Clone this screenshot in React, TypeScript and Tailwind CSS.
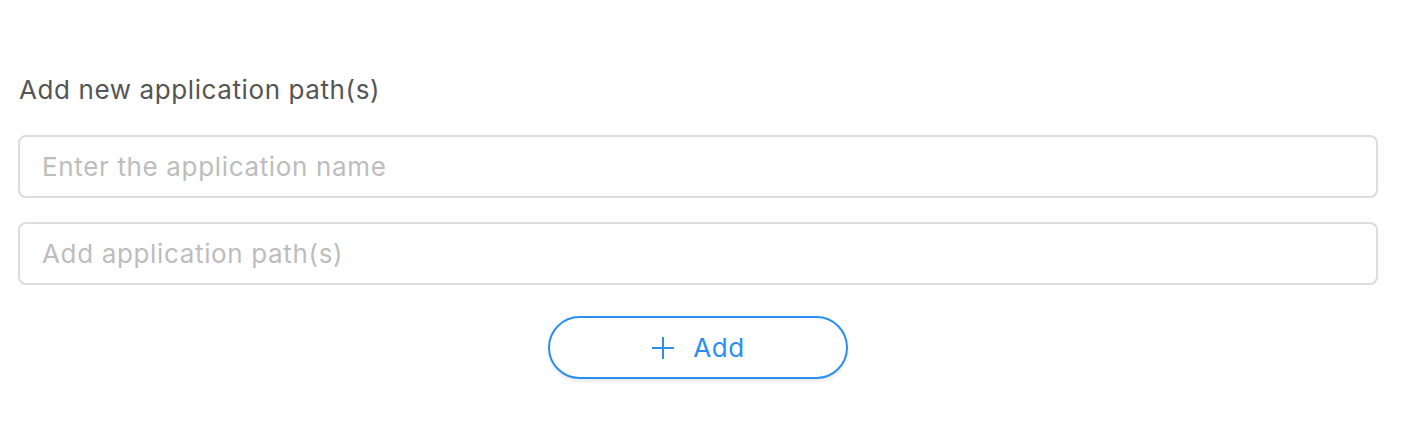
import React from "react";

export default function App() {
  return (
    <div className="w-[1416px] h-[448px] bg-white pt-[72px] px-[18px]" style={{ fontFamily: "Inter, 'Noto Sans', sans-serif" }}>
      <div className="w-[1360px]">
        <div className="text-[26px] leading-[36px] tracking-[0.6px] text-[#555555] pl-[1px] mb-[27px]">Add new application path(s)</div>
        <div className="flex flex-col gap-[24px]">
          <input
            className="h-[63px] w-full rounded-[8px] border-2 border-[#dcdcdc] px-[22px] text-[26px] tracking-[0.65px] text-[#555] placeholder:text-[#bdbdbd] outline-none"
            placeholder="Enter the application name"
          />
          <input
            className="h-[63px] w-full rounded-[8px] border-2 border-[#dcdcdc] px-[22px] text-[26px] tracking-[0.65px] text-[#555] placeholder:text-[#bdbdbd] outline-none"
            placeholder="Add application path(s)"
          />
        </div>
        <div className="flex justify-center mt-[31px]">
          <button className="w-[300px] h-[63px] rounded-full border-2 border-[#2a8ff0] bg-white flex items-center justify-center gap-[18px] text-[#2a8ff0] text-[26px] tracking-[0.6px] shadow-[0_3px_3px_rgba(0,0,0,0.08)]">
            <svg width="24" height="24" viewBox="0 0 24 24" fill="none" stroke="currentColor" strokeWidth="2">
              <path d="M12 1v22M1 12h22" />
            </svg>
            <span>Add</span>
          </button>
        </div>
      </div>
    </div>
  );
}
